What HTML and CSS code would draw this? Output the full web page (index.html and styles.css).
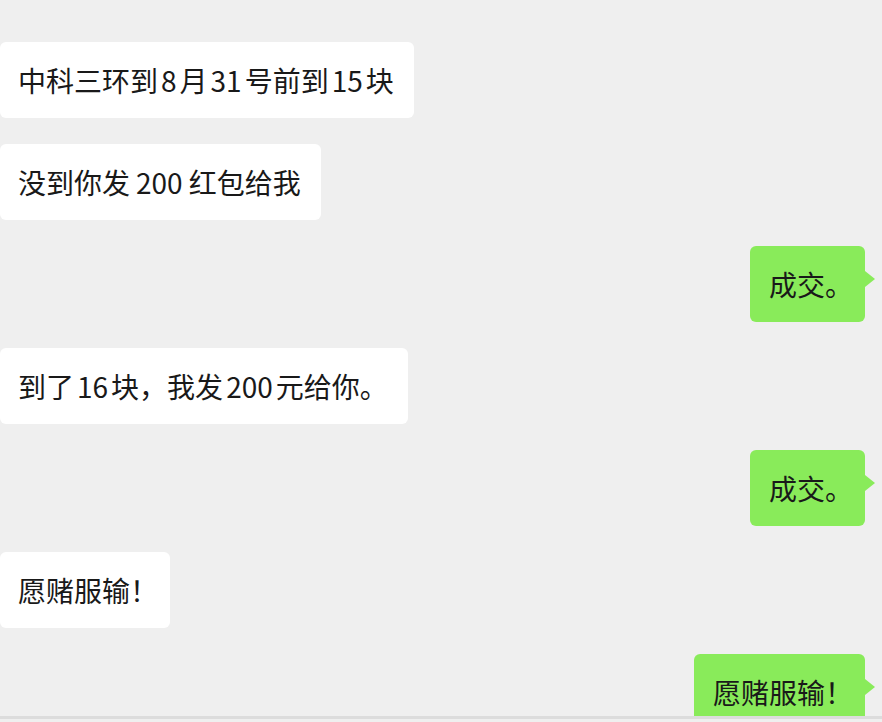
FILE: index.html
```html
<!DOCTYPE html>
<html lang="zh-CN">
<head>
    <meta charset="UTF-8">
    <meta name="viewport" content="width=device-width, initial-scale=1.0">
    <title>聊天</title>
    <link rel="stylesheet" href="styles.css">
</head>
<body>

    <main class="chat">
        <div class="row left"><div class="bubble">中科三环到<span class="n">8</span>月<span class="n">31</span>号前到<span class="n">15</span>块</div></div>
        <div class="row left"><div class="bubble">没到你发<span class="n wide">200</span>红包给我</div></div>
        <div class="row right"><div class="bubble">成交。</div></div>
        <div class="row left"><div class="bubble">到了<span class="n">16</span>块，我发<span class="n">200</span>元给你。</div></div>
        <div class="row right"><div class="bubble">成交。</div></div>
        <div class="row left"><div class="bubble">愿赌服输<span class="bang">！</span></div></div>
        <div class="row right"><div class="bubble">愿赌服输！</div></div>
    </main>

</body>
</html>
```

FILE: styles.css
```css
body { margin: 0; background: #efefef; font-family: "Noto Sans CJK SC", "Noto Sans", sans-serif; color: #191919; }
.chat { height: 719px; overflow: hidden; border-bottom: 3px solid #dcdcdc; padding-top: 42px; box-sizing: border-box; display: flex; flex-direction: column; gap: 26px; }
.row { display: flex; flex-shrink: 0; }
.row.left { justify-content: flex-start; }
.row.right { justify-content: flex-end; padding-right: 17px; }
.bubble { position: relative; font-size: 28px; line-height: 40px; padding: 18px 20px 18px 18px; border-radius: 6px; background: white; white-space: nowrap; }
.right .bubble { background: #89eb5a; padding: 18px 12px 18px 19px; }
.right .bubble::after { content: ""; position: absolute; right: -10px; top: 25px; border-top: 8px solid transparent; border-bottom: 8px solid transparent; border-left: 10px solid #89eb5a; }
.n { margin: 0 3px; }
.n.wide { margin: 0 6px; }
.bang { margin-right: -8px; }
```
